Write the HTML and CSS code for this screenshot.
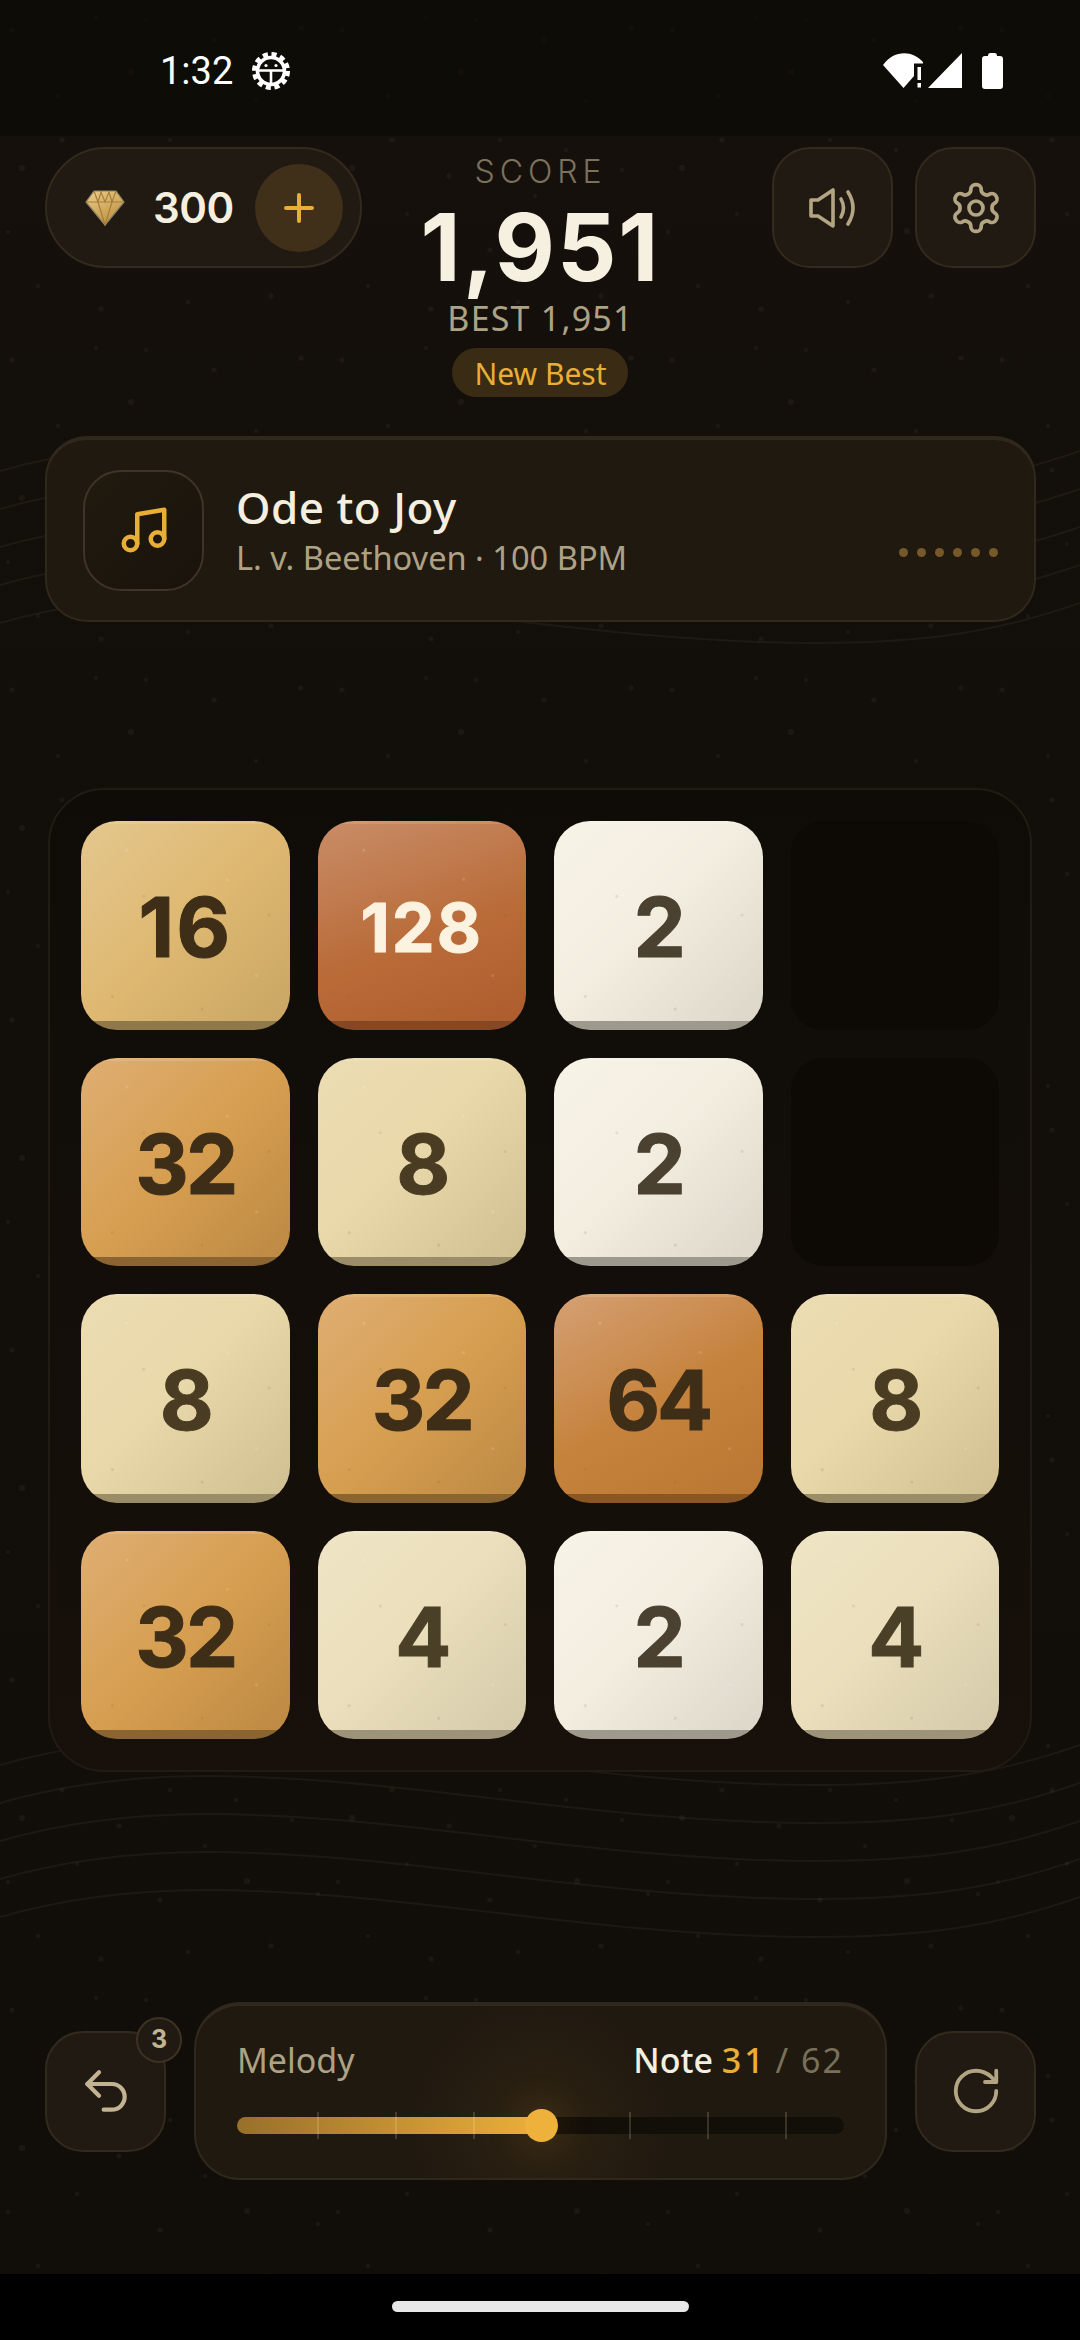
FILE: index.html
```html
<!DOCTYPE html>
<html lang="en">
<head>
    <meta charset="UTF-8">
    <meta name="viewport" content="width=device-width, initial-scale=1.0">
    <title>2048 Melody</title>
    <link rel="stylesheet" href="styles.css">
</head>
<body>
<div class="screen">

    <!-- background waves and grain -->
    <svg class="backdrop" width="1080" height="2340" viewBox="0 0 1080 2340">
        <defs>
            <path id="wave" d="M0 1917C70 1897 140 1890 207 1890C400 1890 600 1937 813 1937C930 1937 1000 1925 1080 1897"/>
            <pattern id="grain" width="330" height="330" patternUnits="userSpaceOnUse">
                <circle cx="12" cy="30" r="2.500"/><circle cx="58" cy="96" r="2"/><circle cx="96" cy="18" r="2"/>
                <circle cx="131" cy="72" r="3"/><circle cx="170" cy="140" r="2"/><circle cx="214" cy="40" r="2.500"/>
                <circle cx="256" cy="101" r="2"/><circle cx="301" cy="28" r="2.500"/><circle cx="22" cy="168" r="3"/>
                <circle cx="77" cy="214" r="2"/><circle cx="119" cy="176" r="2.500"/><circle cx="160" cy="250" r="2.500"/>
                <circle cx="205" cy="196" r="2"/><circle cx="247" cy="231" r="3"/><circle cx="292" cy="170" r="2"/>
                <circle cx="38" cy="286" r="2"/><circle cx="101" cy="309" r="2.500"/><circle cx="188" cy="302" r="2"/>
                <circle cx="271" cy="296" r="2.500"/><circle cx="318" cy="244" r="2"/><circle cx="146" cy="20" r="2"/>
                <circle cx="62" cy="140" r="2.500"/><circle cx="236" cy="150" r="2"/><circle cx="8" cy="232" r="2"/>
            </pattern>
        </defs>
        <rect width="1080" height="2340" fill="url(#grain)"/>
        <g class="waves">
            <use href="#wave"/>
            <use href="#wave" y="-38"/>
            <use href="#wave" y="-76"/>
            <use href="#wave" y="-114"/>
            <use href="#wave" y="-152"/>
            <use href="#wave" y="-1294"/>
            <use href="#wave" y="-1332"/>
            <use href="#wave" y="-1370"/>
            <use href="#wave" y="-1408"/>
            <use href="#wave" y="-1446"/>
        </g>
    </svg>

    <div class="status-bar">
        <div class="status-left">
            <span class="clock">1:32</span>
            <svg width="38" height="38" viewBox="0 0 38 38">
                <circle cx="19" cy="19" r="16.500" fill="none" stroke="#fff" stroke-width="5" stroke-dasharray="5 3.640"/>
                <circle cx="19" cy="19" r="13.500" fill="none" stroke="#fff" stroke-width="3.600"/>
                <path d="M7 18.500h24M19 18.500V31" stroke="#fff" stroke-width="2.600" fill="none"/>
                <circle cx="14" cy="13.500" r="1.600" fill="#fff"/>
                <circle cx="24" cy="13.500" r="1.600" fill="#fff"/>
            </svg>
        </div>
        <div class="status-right">
            <svg width="41" height="35" viewBox="0 0 41 35" fill="#fff">
                <path d="M0 12C11 -3 29 -3 40 9V10.500H31V23L20.500 35Z"/>
                <rect x="34.500" y="14" width="3.500" height="13"/>
                <rect x="34.500" y="30" width="3.500" height="4.500"/>
            </svg>
            <svg class="signal" width="34" height="35" viewBox="0 0 34 35" fill="#fff"><path d="M34 0V35H0Z"/></svg>
            <svg class="battery" width="21" height="36" viewBox="0 0 21 36" fill="#fff">
                <path d="M6 2.500Q6 0 8 0H13Q15 0 15 2.500V3H18Q21 3 21 6V33Q21 36 18 36H3Q0 36 0 33V6Q0 3 3 3H6Z"/>
            </svg>
        </div>
    </div>

    <header class="top-row">
        <div class="gem-pill">
            <svg width="40" height="36" viewBox="0 0 40 36">
                <defs>
                    <linearGradient id="gemFill" x1="0" y1="0" x2="0.6" y2="1">
                        <stop offset="0" stop-color="#eccf8e"/>
                        <stop offset="1" stop-color="#c0913f"/>
                    </linearGradient>
                </defs>
                <path d="M9 1H31L39 12L20 35L1 12Z" fill="url(#gemFill)" stroke="#8f8263" stroke-width="1.200" stroke-linejoin="round"/>
                <path d="M1 12H39M9 1L13 12L20 35L27 12L31 1M13 12L16 2L20 12L24 2L27 12" fill="none" stroke="#a57f3c" stroke-width="1.200"/>
            </svg>
            <span class="gem-count">300</span>
            <div class="add-btn">
                <svg width="30" height="30" viewBox="0 0 30 30">
                    <path d="M15 2V28M2 15H28" stroke="#e9ae35" stroke-width="4" stroke-linecap="round"/>
                </svg>
            </div>
        </div>

        <div class="score-box">
            <div class="score-label">SCORE</div>
            <div class="score-value">1,951</div>
            <div class="score-best">BEST 1,951</div>
            <div class="new-best">New Best</div>
        </div>

        <div class="top-actions">
            <div class="icon-btn">
                <svg width="48" height="40" viewBox="0 0 48 40" fill="none" stroke="#b3a583" stroke-width="3.600" stroke-linecap="round" stroke-linejoin="round">
                    <path d="M2 12H9L24 2V38L9 28H2Z"/>
                    <path d="M32 11Q37 20 32 29"/>
                    <path d="M39 4Q49 20 39 36"/>
                </svg>
            </div>
            <div class="icon-btn">
                <svg width="56" height="56" viewBox="0 0 24 24" fill="none" stroke="#b3a583" stroke-width="1.600" stroke-linecap="round" stroke-linejoin="round">
                    <path d="M12.220 2h-.44a2 2 0 0 0-2 2v.18a2 2 0 0 1-1 1.730l-.43.25a2 2 0 0 1-2 0l-.15-.08a2 2 0 0 0-2.730.73l-.22.38a2 2 0 0 0 .73 2.730l.15.1a2 2 0 0 1 1 1.720v.51a2 2 0 0 1-1 1.740l-.15.09a2 2 0 0 0-.73 2.730l.22.38a2 2 0 0 0 2.730.73l.15-.08a2 2 0 0 1 2 0l.43.25a2 2 0 0 1 1 1.730V20a2 2 0 0 0 2 2h.44a2 2 0 0 0 2-2v-.18a2 2 0 0 1 1-1.730l.43-.25a2 2 0 0 1 2 0l.15.08a2 2 0 0 0 2.730-.73l.22-.39a2 2 0 0 0-.73-2.730l-.15-.08a2 2 0 0 1-1-1.740v-.5a2 2 0 0 1 1-1.740l.15-.09a2 2 0 0 0 .73-2.730l-.22-.38a2 2 0 0 0-2.730-.73l-.15.08a2 2 0 0 1-2 0l-.43-.25a2 2 0 0 1-1-1.730V4a2 2 0 0 0-2-2z"/>
                    <circle cx="12" cy="12" r="3"/>
                </svg>
            </div>
        </div>
    </header>

    <section class="song-card">
        <div class="song-art">
            <svg width="54" height="54" viewBox="0 0 24 24" fill="none" stroke="#e9ae35" stroke-width="2" stroke-linecap="round" stroke-linejoin="round">
                <path d="M9 18V5l12-2v13"/>
                <circle cx="6" cy="18" r="3"/>
                <circle cx="18" cy="16" r="3"/>
            </svg>
        </div>
        <div class="song-info">
            <div class="song-title">Ode to Joy</div>
            <div class="song-meta">L. v. Beethoven · 100 BPM</div>
        </div>
        <div class="song-dots">
            <i></i><i></i><i></i><i></i><i></i><i></i>
        </div>
    </section>

    <main class="board">
        <div class="tile t16">16</div>
        <div class="tile t128">128</div>
        <div class="tile t2">2</div>
        <div class="tile empty"></div>
        <div class="tile t32">32</div>
        <div class="tile t8">8</div>
        <div class="tile t2">2</div>
        <div class="tile empty"></div>
        <div class="tile t8">8</div>
        <div class="tile t32">32</div>
        <div class="tile t64">64</div>
        <div class="tile t8">8</div>
        <div class="tile t32">32</div>
        <div class="tile t4">4</div>
        <div class="tile t2">2</div>
        <div class="tile t4">4</div>
    </main>

    <footer class="controls">
        <div class="icon-btn undo-btn">
            <svg width="56" height="56" viewBox="0 0 24 24" fill="none" stroke="#c2b493" stroke-width="1.800" stroke-linecap="round" stroke-linejoin="round">
                <path d="M9 14 4 9l5-5"/>
                <path d="M4 9h10.500a5.500 5.500 0 0 1 0 11H11"/>
            </svg>
            <span class="undo-count">3</span>
        </div>

        <div class="melody-card">
            <div class="melody-head">
                <span class="melody-label">Melody</span>
                <span class="melody-note">Note <b>31</b> <em>/ 62</em></span>
            </div>
            <div class="track">
                <div class="track-fill" style="width: 50%"></div>
                <div class="track-ticks">
                    <i></i><i></i><i></i><i class="hidden"></i><i></i><i></i><i></i>
                </div>
                <div class="track-knob" style="left: 50%"></div>
            </div>
        </div>

        <div class="icon-btn">
            <svg width="54" height="54" viewBox="0 0 24 24" fill="none" stroke="#b3a583" stroke-width="1.700" stroke-linecap="round" stroke-linejoin="round">
                <path d="M21 12a9 9 0 1 1-9-9c2.520 0 4.930 1 6.740 2.740L21 8"/>
                <path d="M21 3v5h-5"/>
            </svg>
        </div>
    </footer>

    <div class="nav-bar"><div class="nav-pill"></div></div>
</div>
</body>
</html>
```

FILE: styles.css
```css
* {
    margin: 0;
    padding: 0;
    box-sizing: border-box;
}

body {
    width: 1080px;
    height: 2340px;
    overflow: hidden;
    background: #110e09;
    font-family: "Noto Sans", sans-serif;
}

.screen {
    position: relative;
    width: 1080px;
    height: 2340px;
    display: flex;
    flex-direction: column;
    background: linear-gradient(180deg, #15100b 136px, #120e09 700px, #110e09 100%);
}

.backdrop {
    position: absolute;
    top: 0;
    left: 0;
}

#grain circle {
    fill: rgba(255, 240, 210, 0.045);
}

.waves {
    fill: none;
    stroke: rgba(255, 240, 205, 0.05);
    stroke-width: 2;
}

/* status bar */
.status-bar {
    position: relative;
    flex: none;
    height: 136px;
    padding: 0 77px 0 160px;
    display: flex;
    justify-content: space-between;
    align-items: flex-start;
    background: rgba(10, 9, 5, 0.55);
}

.status-left {
    display: flex;
    align-items: center;
    gap: 19px;
    padding-top: 52px;
    height: 90px;
}

.clock {
    font-family: Roboto, sans-serif;
    font-size: 38px;
    color: #fff;
    line-height: 38px;
}

.status-right {
    display: flex;
    align-items: flex-start;
    padding-top: 53px;
}

.signal {
    margin-left: 4px;
}

.battery {
    margin-left: 20px;
}

/* top row */
.top-row {
    position: relative;
    flex: none;
    display: grid;
    grid-template-columns: 1fr auto 1fr;
    margin-top: 11px;
    padding: 0 44px 0 45px;
    height: 250px;
}

.gem-pill {
    justify-self: start;
    width: 317px;
    height: 121px;
    border-radius: 61px;
    background: #211a12;
    border: 2px solid #332a1e;
    display: flex;
    align-items: center;
    padding-left: 38px;
}

.gem-count {
    margin-left: 28px;
    width: 80px;
    font-family: Inter, sans-serif;
    font-size: 42px;
    font-weight: 600;
    letter-spacing: -0.5px;
    color: #f5efe0;
}

.add-btn {
    width: 88px;
    height: 88px;
    margin-left: 22px;
    border-radius: 50%;
    background: #402f19;
    display: flex;
    align-items: center;
    justify-content: center;
}

.score-box {
    display: flex;
    flex-direction: column;
    align-items: center;
}

.score-label {
    margin-top: 8px;
    font-family: Inter, sans-serif;
    font-size: 32px;
    line-height: 34px;
    letter-spacing: 5px;
    font-weight: 300;
    color: #7c715b;
}

.score-value {
    margin-top: 8px;
    font-family: Inter, sans-serif;
    font-size: 93px;
    line-height: 101px;
    font-weight: 700;
    letter-spacing: 2px;
    color: #f6f0e1;
}

.score-best {
    font-size: 34px;
    line-height: 40px;
    letter-spacing: 1.200px;
    color: #aea285;
}

.new-best {
    margin-top: 10px;
    width: 176px;
    height: 49px;
    border-radius: 25px;
    background: #3a2b14;
    color: #e9ae35;
    font-size: 30px;
    line-height: 52px;
    text-align: center;
}

.top-actions {
    justify-self: end;
    display: flex;
    gap: 22px;
}

.icon-btn {
    position: relative;
    flex: none;
    width: 121px;
    height: 121px;
    border-radius: 38px;
    background: #211a12;
    border: 2px solid #332a1e;
    display: flex;
    align-items: center;
    justify-content: center;
}

/* song card */
.song-card {
    position: relative;
    flex: none;
    margin: 39px 44px 0 45px;
    height: 186px;
    border-radius: 42px;
    background: #201910;
    border: 2px solid #30281c;
    border-top: 4px solid #30281c;
    display: flex;
    align-items: center;
    padding: 0 36px;
}

.song-art {
    flex: none;
    width: 121px;
    height: 121px;
    border-radius: 38px;
    border: 2px solid #3d3528;
    background: linear-gradient(135deg, #211a0f, #19130c);
    display: flex;
    align-items: center;
    justify-content: center;
}

.song-info {
    margin-left: 32px;
    flex: 1;
}

.song-title {
    font-size: 44px;
    line-height: 56px;
    font-weight: 500;
    letter-spacing: 0.500px;
    color: #f5efe0;
}

.song-meta {
    font-size: 32.600px;
    line-height: 46px;
    color: #aea285;
}

.song-dots {
    display: flex;
    gap: 8.500px;
    align-self: flex-end;
    margin-bottom: 63px;
}

.song-dots i {
    width: 9.500px;
    height: 9.500px;
    border-radius: 50%;
    background: #77582a;
}

/* board */
.board {
    position: relative;
    flex: none;
    margin: 166px 48px 0;
    width: 984px;
    height: 984px;
    padding: 31px;
    border-radius: 56px;
    border: 2px solid #211b13;
    background: linear-gradient(180deg, #0f0c08, #17100b);
    display: grid;
    grid-template-columns: repeat(4, 208.500px);
    grid-auto-rows: 208.500px;
    gap: 28px;
}

.tile {
    --grain: radial-gradient(circle at 22% 14%, rgba(255,255,255,.14) 1px, transparent 2px),
        radial-gradient(circle at 70% 28%, rgba(255,255,255,.12) 1px, transparent 2px),
        radial-gradient(circle at 40% 62%, rgba(255,255,255,.12) 1px, transparent 2px),
        radial-gradient(circle at 84% 74%, rgba(255,255,255,.12) 1px, transparent 2px),
        radial-gradient(circle at 15% 84%, rgba(120,90,40,.14) 1px, transparent 2px),
        radial-gradient(circle at 58% 90%, rgba(120,90,40,.14) 1px, transparent 2px),
        radial-gradient(circle at 30% 36%, rgba(120,90,40,.12) 1px, transparent 2px),
        radial-gradient(circle at 90% 45%, rgba(120,90,40,.12) 1px, transparent 2px);
    --edge: linear-gradient(0deg, var(--strip) 9px, transparent 9px),
        linear-gradient(180deg, rgba(255,255,255,.12) 3px, transparent 3px);
    border-radius: 36px;
    display: flex;
    align-items: center;
    justify-content: center;
    padding-top: 4px;
    font-family: Inter, sans-serif;
    font-size: 83px;
    font-weight: 700;
    -webkit-text-stroke: 1px currentColor;
    letter-spacing: -3px;
    color: #3f2e17;
    background: var(--edge), var(--grain), var(--face);
}

.empty {
    background: #0d0a05;
    border-radius: 32px;
}

.t2 {
    --face: linear-gradient(135deg, #f7f3e6 0%, #f3eee0 45%, #dad5c7 100%);
    --strip: #9d998c;
    color: #4a4131;
}

.t4 {
    --face: linear-gradient(135deg, #efe4c5 0%, #ebdfbc 45%, #d3c8a9 100%);
    --strip: #9c9378;
    color: #4a4028;
}

.t8 {
    --face: linear-gradient(135deg, #ecdcb3 0%, #e9d8a9 45%, #cfbe90 100%);
    --strip: #9a8d68;
    color: #4a3c22;
}

.t16 {
    --face: linear-gradient(135deg, #e4c78e 0%, #deb871 50%, #c7a563 100%);
    --strip: #8f784a;
    letter-spacing: 2px;
}

.t32 {
    --face: linear-gradient(135deg, #dfae73 0%, #d69e50 50%, #bb8843 100%);
    --strip: #8b6531;
}

.t64 {
    --face: linear-gradient(150deg, #d5a074 0%, #c6833e 50%, #b97632 100%);
    --strip: #8a5724;
}

.t128 {
    --face: linear-gradient(160deg, #c98d68 0%, #b96b38 55%, #ac5c2c 100%);
    --strip: #864824;
    color: #fbf2df;
    font-size: 68px;
    letter-spacing: 2px;
}

/* bottom controls */
.controls {
    position: relative;
    flex: none;
    margin-top: 230px;
    padding: 0 44px 0 45px;
    display: flex;
    align-items: center;
    gap: 28px;
}

.undo-count {
    position: absolute;
    top: -16px;
    right: -18px;
    width: 46px;
    height: 46px;
    border-radius: 50%;
    background: #211a12;
    border: 2px solid #3b3224;
    color: #c2b493;
    font-family: Inter, sans-serif;
    font-size: 25px;
    font-weight: 700;
    line-height: 41px;
    text-align: center;
}

.melody-card {
    flex: 1;
    height: 178px;
    border-radius: 46px;
    background: radial-gradient(circle at 50% 70%, #2e2312 0, #201910 130px);
    border: 2px solid #30281c;
    border-top: 4px solid #30281c;
    padding: 0 41px;
}

.melody-head {
    display: flex;
    justify-content: space-between;
    align-items: center;
    margin-top: 31px;
    height: 46px;
}

.melody-label {
    font-size: 34px;
    color: #aea285;
}

.melody-note {
    font-size: 34px;
    font-weight: 500;
    color: #f5efe0;
}

.melody-note b {
    font-weight: 500;
    color: #e9ae35;
    letter-spacing: 3px;
}

.melody-note em {
    font-style: normal;
    font-weight: 400;
    color: #7a705a;
    letter-spacing: 2px;
}

.track {
    position: relative;
    margin-top: 34px;
    height: 17px;
    border-radius: 9px;
    background: #120e08;
}

.track-fill {
    height: 100%;
    border-radius: 9px 0 0 9px;
    background: linear-gradient(90deg, #98702a, #ecb03a);
}

.track-ticks {
    position: absolute;
    top: -5px;
    bottom: -5px;
    left: 80px;
    right: 57px;
    display: flex;
    justify-content: space-between;
}

.track-ticks i {
    width: 2px;
    background: rgba(255, 240, 205, 0.16);
}

.track-ticks .hidden {
    visibility: hidden;
}

.track-knob {
    position: absolute;
    top: -8px;
    width: 33px;
    height: 33px;
    margin-left: -16px;
    border-radius: 50%;
    background: #edb13c;
    box-shadow: 0 0 40px rgba(233, 174, 53, 0.22);
}

/* navigation bar */
.nav-bar {
    position: relative;
    margin-top: auto;
    flex: none;
    height: 66px;
    background: #000;
    display: flex;
    justify-content: center;
    padding-top: 27px;
}

.nav-pill {
    width: 297px;
    height: 11px;
    border-radius: 6px;
    background: #e8e8e8;
}
```
